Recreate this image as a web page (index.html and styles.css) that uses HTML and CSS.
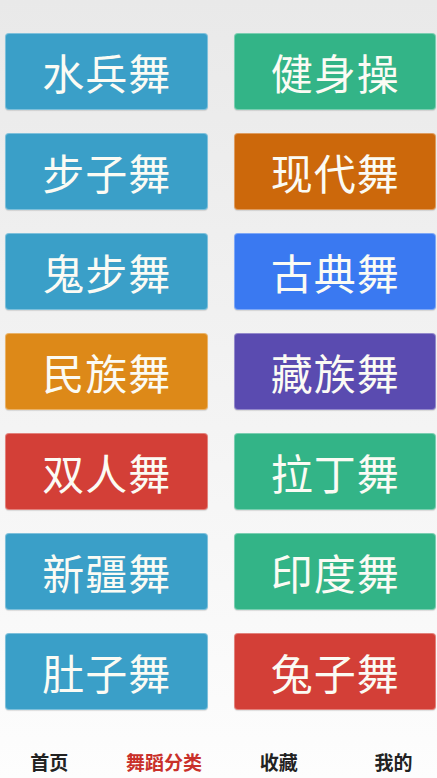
FILE: index.html
```html
<!DOCTYPE html>
<html lang="zh-CN">
<head>
    <meta charset="UTF-8">
    <meta name="viewport" content="width=device-width, initial-scale=1.0">
    <title>舞蹈分类</title>
    <link rel="stylesheet" href="styles.css">
</head>
<body>
    <div class="page">
        <div class="dances">
            <button class="dance blue">水兵舞</button>
            <button class="dance green">健身操</button>
            <button class="dance blue">步子舞</button>
            <button class="dance rust">现代舞</button>
            <button class="dance blue">鬼步舞</button>
            <button class="dance royal">古典舞</button>
            <button class="dance orange">民族舞</button>
            <button class="dance purple">藏族舞</button>
            <button class="dance red">双人舞</button>
            <button class="dance green">拉丁舞</button>
            <button class="dance blue">新疆舞</button>
            <button class="dance green">印度舞</button>
            <button class="dance blue">肚子舞</button>
            <button class="dance red">兔子舞</button>
        </div>
        <div class="tabbar">
            <a>首页</a>
            <a class="active">舞蹈分类</a>
            <a>收藏</a>
            <a>我的</a>
        </div>
    </div>
</body>
</html>
```

FILE: styles.css
```css
*{
    margin: 0;
    padding: 0;
    box-sizing: border-box;
}
body{
    font-family: "Noto Sans CJK SC", "Noto Sans", sans-serif;
    background: linear-gradient(#e9e9e9, #f4f4f4 55%, #fdfdfd);
}
.page{
    display: flex;
    flex-direction: column;
    height: 778px;
    overflow: hidden;
}
.dances{
    flex: 1;
    display: grid;
    grid-template-columns: 1fr 1fr;
    grid-auto-rows: 77px;
    column-gap: 26px;
    row-gap: 23px;
    padding: 33px 1px 0 5px;
}
.dance{
    border: 1px solid rgba(255,255,255,.35);
    border-radius: 4px;
    font-family: inherit;
    font-size: 42px;
    font-weight: 400;
    letter-spacing: 1px;
    color: #fbfbf4;
    line-height: 1;
    padding: 0 0 0 1px;
    box-shadow: 0 1px 1px rgba(0,0,0,.12);
}
.blue{ background-color: #3a9fc8; }
.green{ background-color: #33b487; }
.rust{ background-color: #cc680b; }
.royal{ background-color: #3a79f1; }
.orange{ background-color: #dd8918; }
.purple{ background-color: #5a4bb0; }
.red{ background-color: #d33f37; }
.tabbar{
    display: grid;
    grid-template-columns: repeat(4, 1fr);
    margin: 0 -14px 0 -8px;
    height: 28px;
}
.tabbar a{
    text-align: center;
    font-size: 19px;
    font-weight: bold;
    line-height: 24px;
    color: #222;
}
.tabbar .active{
    color: #c9302a;
}
```
